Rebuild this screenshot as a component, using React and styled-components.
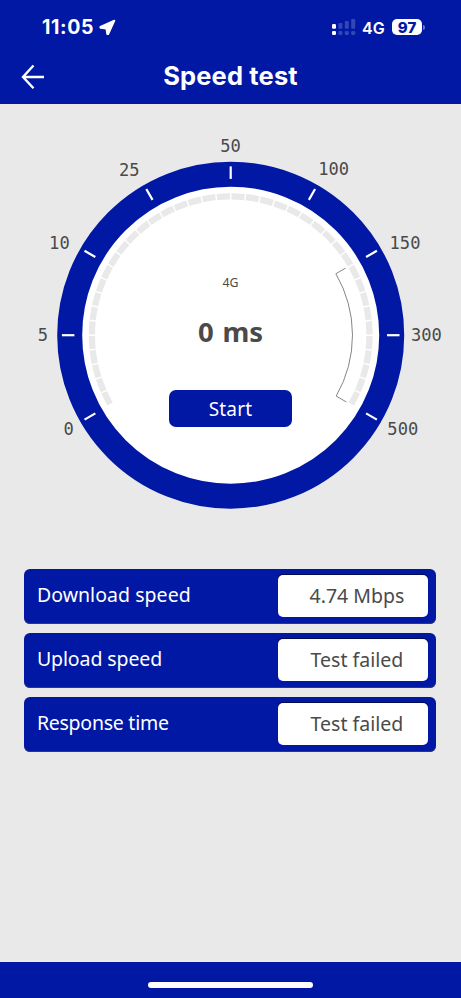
import React from "react";
import styled, { createGlobalStyle } from "styled-components";

const GlobalStyle = createGlobalStyle`
  * {
    box-sizing: border-box;
  }
  body {
    margin: 0;
    background: #e9e9e9;
    font-family: "Noto Sans", "Open Sans", sans-serif;
  }
`;

const Screen = styled.div`
  width: 461px;
  height: 998px;
  display: flex;
  flex-direction: column;
  background: #e9e9e9;
  color: #4a4a4a;
  overflow: hidden;
`;
const Header = styled.header`
  height: 104px;
  background: #0018a3;
  color: #fff;
  font-family: Inter, "Liberation Sans", sans-serif;
`;
const StatusBar = styled.div`
  height: 54px;
  padding: 0 36px 0 42px;
  display: flex;
  justify-content: space-between;
  align-items: center;
`;
const StatusGroup = styled.div`
  display: flex;
  align-items: center;
`;
const Time = styled.span`
  width: 57px;
  font-size: 19.5px;
  font-weight: 700;
  letter-spacing: 0.6px;
  line-height: 24px;
`;
const Network = styled.span`
  width: 30px;
  margin-left: 6.5px;
  font-size: 16px;
  font-weight: 600;
  line-height: 20px;
  padding-top: 2px;
`;
const Battery = styled.span`
  width: 30px;
  height: 16px;
  border-radius: 5px;
  background: #fff;
  color: #0018a3;
  font-size: 15px;
  font-weight: 800;
  line-height: 17px;
  text-align: center;
`;
const BatteryCap = styled.span`
  width: 2px;
  height: 5px;
  margin-left: 1px;
  border-radius: 0 2px 2px 0;
  background: #6674c8;
`;
const TitleBar = styled.div`
  height: 44px;
  padding: 0 20px;
  display: grid;
  grid-template-columns: 28px 1fr 28px;
  align-items: center;
`;
const BackButton = styled.button`
  padding: 0;
  height: 28px;
  border: none;
  background: none;
  color: #fff;
`;
const Title = styled.h1`
  margin: 0;
  font-size: 25.5px;
  font-weight: 700;
  letter-spacing: 0.15px;
  line-height: 30px;
  text-align: center;
`;
const Content = styled.main`
  flex: 1;
`;
const Dial = styled.section`
  display: grid;
  height: 464.6px;
  svg,
  div {
    grid-area: 1 / 1;
  }
`;
const DialFace = styled.div`
  padding-top: 169px;
  display: flex;
  flex-direction: column;
  align-items: center;
`;
const Technology = styled.span`
  font-size: 12.3px;
  line-height: 20px;
`;
const Reading = styled.strong`
  margin-top: 19px;
  font-size: 27.5px;
  font-weight: 700;
  line-height: 40px;
  word-spacing: 1.5px;
`;
const StartButton = styled.button`
  margin-top: 38px;
  width: 123px;
  height: 37px;
  padding: 0;
  border: none;
  border-radius: 7px;
  background: #0018a3;
  color: #fff;
  font-family: inherit;
  font-size: 19px;
  letter-spacing: 0.2px;
`;
const ScaleLabel = styled.text`
  font-family: "DejaVu Sans Mono", monospace;
  font-size: 17px;
  fill: #4a4a4a;
`;
const Results = styled.section`
  padding: 0 24.6px 0 24.4px;
  display: flex;
  flex-direction: column;
  gap: 9px;
`;
const ResultRow = styled.div`
  height: 55px;
  padding: 0 8.5px 0 12.5px;
  display: flex;
  justify-content: space-between;
  align-items: center;
  border-radius: 6px;
  background: #0018a3;
  box-shadow: inset 0 -1px 0 #30387c;
`;
const ResultLabel = styled.span`
  color: #fff;
  font-size: 19.5px;
  letter-spacing: ${(props) => props.$spacing || 0}px;
  line-height: 28px;
  padding-bottom: 3px;
`;
const ResultValue = styled.span`
  width: 150px;
  height: 41.5px;
  padding-left: 8px;
  border-radius: 5px;
  background: #fff;
  box-shadow: 0 -1px 0 #000b50, 0 1px 0 #0808e0;
  font-size: 19.5px;
  line-height: 42px;
  text-align: center;
`;
const Footer = styled.footer`
  height: 36.5px;
  padding-top: 20.5px;
  background: #0018a3;
`;
const HomeIndicator = styled.div`
  width: 165px;
  height: 6px;
  margin: 0 auto;
  border-radius: 3px;
  background: #fff;
`;

const cx = 230.7;
const cy = 231.2;

const point = (radius, degrees) => {
  const angle = (degrees * Math.PI) / 180;
  return [cx + radius * Math.cos(angle), cy - radius * Math.sin(angle)];
};

const arc = (radius, from, to) => {
  const large = Math.abs(from - to) > 180 ? 1 : 0;
  return `M${point(radius, from)} A${radius} ${radius} 0 ${large} 1 ${point(radius, to)}`;
};

const scale = [
  { value: "0", angle: 210, x: 68.6, y: 330.8 },
  { value: "5", angle: 180, x: 43, y: 237.4 },
  { value: "10", angle: 150, x: 59.4, y: 144.6 },
  { value: "25", angle: 120, x: 129.3, y: 72 },
  { value: "50", angle: 90, x: 230.6, y: 48 },
  { value: "100", angle: 60, x: 333.6, y: 70.6 },
  { value: "150", angle: 30, x: 405, y: 144.6 },
  { value: "300", angle: 0, x: 426.4, y: 237.4 },
  { value: "500", angle: -30, x: 402.8, y: 331.2 },
];

const results = [
  { label: "Download speed", value: "4.74 Mbps", spacing: 0.05 },
  { label: "Upload speed", value: "Test failed", spacing: -0.1 },
  { label: "Response time", value: "Test failed", spacing: -0.25 },
];

function SignalIcon() {
  const tops = [24, 23, 21, 19];
  return (
    <svg width="24" height="16" viewBox="0 0 24 16" fill="#fff">
      {tops.map((top, i) => (
        <g key={top} opacity={i === 0 ? 1 : 0.2}>
          <rect x={i * 6.4} y={top - 19} width="4" height={28.8 - top} rx="1.2" />
          <rect x={i * 6.4} y="12" width="4" height="4" rx="1.2" />
        </g>
      ))}
    </svg>
  );
}

function Gauge() {
  const segments = Array.from({ length: 40 }, (_, i) => 210 - i * 6);
  return (
    <svg width="461" height="464" viewBox="0 0 461 464" fill="none">
      <circle cx={cx} cy={cy} r="161" fill="#fff" stroke="#0018a3" strokeWidth="25" />
      {segments.map((start) => (
        <path
          key={start}
          d={arc(138.8, start - 0.3, start - 5.7)}
          stroke="#e9e9e9"
          strokeWidth="6.3"
        />
      ))}
      <path
        d={`M${point(133, 30.3)} L${point(121.8, 30.3)} A121.8 121.8 0 0 1 ${point(121.8, -30)} L${point(133.5, -30)}`}
        stroke="#777"
        strokeWidth="0.9"
      />
      {scale.map(({ value, angle, x, y }) => (
        <g key={value}>
          <path
            d={`M${point(156.3, angle)} L${point(168.8, angle)}`}
            stroke="#fff"
            strokeWidth="2.2"
          />
          <ScaleLabel
            x={x}
            y={y}
            textAnchor="middle"
            textLength={value.length * 10.3}
            lengthAdjust="spacingAndGlyphs"
          >
            {value}
          </ScaleLabel>
        </g>
      ))}
    </svg>
  );
}

function App() {
  return (
    <Screen>
      <GlobalStyle />
      <Header>
        <StatusBar>
          <StatusGroup>
            <Time>11:05</Time>
            <svg width="17" height="17" viewBox="0 0 17 17">
              <path
                d="M15.4 1.6 9.2 15.2 8.2 15.2 7.4 9.6 1.4 8.8 1.4 7.8Z"
                fill="#fff"
                stroke="#fff"
                strokeWidth="1.8"
                strokeLinejoin="round"
              />
            </svg>
          </StatusGroup>
          <StatusGroup>
            <SignalIcon />
            <Network>4G</Network>
            <Battery>97</Battery>
            <BatteryCap />
          </StatusGroup>
        </StatusBar>
        <TitleBar>
          <BackButton aria-label="Back">
            <svg width="28" height="28" viewBox="0 0 28 28" fill="none">
              <path
                d="M13.5 3.5 3 15 13.5 26.2M3 15H24"
                stroke="#fff"
                strokeWidth="2.4"
              />
            </svg>
          </BackButton>
          <Title>Speed test</Title>
        </TitleBar>
      </Header>
      <Content>
        <Dial>
          <Gauge />
          <DialFace>
            <Technology>4G</Technology>
            <Reading>0 ms</Reading>
            <StartButton>Start</StartButton>
          </DialFace>
        </Dial>
        <Results>
          {results.map(({ label, value, spacing }) => (
            <ResultRow key={label}>
              <ResultLabel $spacing={spacing}>{label}</ResultLabel>
              <ResultValue>{value}</ResultValue>
            </ResultRow>
          ))}
        </Results>
      </Content>
      <Footer>
        <HomeIndicator />
      </Footer>
    </Screen>
  );
}
export default App;
